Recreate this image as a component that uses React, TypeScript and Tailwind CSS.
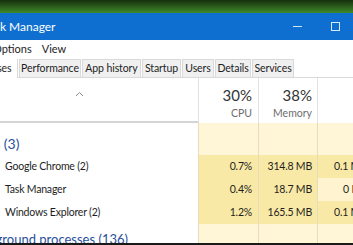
const tabs = [
  { t: "Performance", w: "w-[62px]" },
  { t: "App history", w: "w-[59px]" },
  { t: "Startup", w: "w-[39px]" },
  { t: "Users", w: "w-[32px]" },
  { t: "Details", w: "w-[36px]" },
  { t: "Services", w: "w-[42px]" },
];

const rows = [
  { name: "Google Chrome (2)", cpu: "0.7%", mem: "314.8 MB", disk: "0.1 MB/s", diskHot: true },
  { name: "Task Manager", cpu: "0.4%", mem: "18.7 MB", disk: "0 MB/s", diskHot: false },
  { name: "Windows Explorer (2)", cpu: "1.2%", mem: "165.5 MB", disk: "0.1 MB/s", diskHot: true },
];

export default function App() {
  return (
    <div
      className="relative h-[245px] w-[353px] overflow-hidden bg-white text-[#1e1e1e]"
      style={{ fontFamily: 'Lato, "Noto Sans", sans-serif' }}
    >
      {/* desktop strip */}
      <div className="h-[13px] bg-gradient-to-b from-[#16300d] via-[#2a5c1c] to-[#3f8a2c]" />

      {/* title bar - window runs off the left edge */}
      <div className="flex h-[27px] items-center overflow-hidden bg-[#0f6fd0] text-white">
        <span className="-ml-[17px] shrink-0 whitespace-nowrap text-[12px]">Task Manager</span>
        <div className="ml-auto mr-[13px] flex items-center gap-[29px]">
          <div className="h-px w-[9px] bg-[#cfe4f7]" />
          <div className="h-[9px] w-[9px] border border-[#d7eafb]" />
        </div>
      </div>

      {/* menu */}
      <div className="flex h-[19px] items-center gap-[10px] overflow-hidden text-[11px]">
        <span className="-ml-[27px] shrink-0 whitespace-nowrap">File Options</span>
        <span>View</span>
      </div>

      {/* tabs */}
      <div className="flex h-[19px] items-end gap-px border-b border-[#d9d9d9] text-[10.5px] tracking-[-0.1px]">
        <div className="-mb-px flex h-[19px] w-[18px] items-center overflow-hidden border-r border-[#d9d9d9] bg-white">
          <span className="-ml-[33px] shrink-0 whitespace-nowrap">Processes</span>
        </div>
        {tabs.map((t) => (
          <div
            key={t.t}
            className={
              "flex h-[18px] items-center justify-center whitespace-nowrap border border-b-0 border-[#d9d9d9] bg-[#f0f0f0] " +
              t.w
            }
          >
            {t.t}
          </div>
        ))}
      </div>

      {/* column header */}
      <div className="flex h-[45px]">
        <div className="flex w-[198px] justify-center border-b-2 border-[#d4d4d4] pt-[13px]">
          <span className="ml-[-40px]">
            <svg width="9" height="6" viewBox="0 0 9 6" className="block">
              <path d="M1 5 L4.5 1.5 L8 5" fill="none" stroke="#8a8a8a" strokeWidth="1" />
            </svg>
          </span>
        </div>
        <div className="flex w-[60px] flex-col items-end border-l border-[#e2e2e2] pr-[6px] pt-[9px]">
          <span className="text-[15px] leading-[17px] text-[#333]">30%</span>
          <span className="mt-[3px] text-[10.5px] leading-[12px] text-[#6d6d6d]">CPU</span>
        </div>
        <div className="flex w-[59px] flex-col items-end border-l border-[#e2e2e2] pr-[5px] pt-[9px]">
          <span className="text-[15px] leading-[17px] text-[#333]">38%</span>
          <span className="mt-[3px] text-[10.5px] leading-[12px] text-[#6d6d6d]">Memory</span>
        </div>
        <div className="flex-1 border-l border-[#e2e2e2]" />
      </div>

      {/* group */}
      <div className="flex h-[32px]">
        <div className="flex w-[198px] items-center overflow-hidden pt-[8px]">
          <span className="-ml-[31px] shrink-0 whitespace-nowrap text-[14px] text-[#2a4f9c]">Apps (3)</span>
        </div>
        <div className="w-[60px] border-l border-[#e6dcbc] bg-[#fff6d8]" />
        <div className="w-[59px] border-l border-[#e6dcbc] bg-[#fff6d8]" />
        <div className="flex-1 border-l border-[#e6dcbc] bg-[#fff6d8]" />
      </div>

      {rows.map((r) => (
        <div key={r.name} className="flex h-[23px] text-[10.5px] tracking-[-0.2px]">
          <div className="flex w-[198px] items-center pl-[5px]">{r.name}</div>
          <div className="flex w-[60px] items-center justify-end border-l border-[#e6dcbc] bg-[#f9e9a6] pr-[6px]">
            {r.cpu}
          </div>
          <div className="flex w-[59px] items-center justify-end border-l border-[#e6dcbc] bg-[#f9e9a6] pr-[5px]">
            {r.mem}
          </div>
          <div
            className={
              "flex flex-1 items-center overflow-hidden whitespace-nowrap border-l border-[#e6dcbc] pl-[16px] " +
              (r.diskHot ? "bg-[#f9e9a6]" : "bg-[#fff4cf]")
            }
          >
            <span className={"shrink-0 " + (r.diskHot ? "" : "pl-[9px]")}>{r.disk}</span>
          </div>
        </div>
      ))}

      {/* background group */}
      <div className="flex h-[21px]">
        <div className="flex w-[198px] items-end overflow-hidden">
          <span className="-mb-[4px] -ml-[32px] shrink-0 whitespace-nowrap text-[13px] text-[#2a4f9c]">
            Background processes (136)
          </span>
        </div>
        <div className="w-[60px] border-l border-[#e6dcbc] bg-[#fff6d8]" />
        <div className="w-[59px] border-l border-[#e6dcbc] bg-[#fff6d8]" />
        <div className="flex-1 border-l border-[#e6dcbc] bg-[#fff6d8]" />
      </div>

      <div className="absolute bottom-0 left-0 h-[2px] w-full bg-[#1a1a1a]" />
    </div>
  );
}
